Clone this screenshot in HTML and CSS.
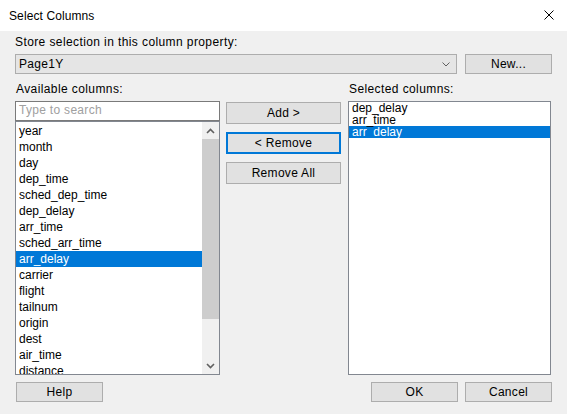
FILE: index.html
```html
<!DOCTYPE html>
<html>
<head>
<meta charset="utf-8">
<link rel="stylesheet" href="styles.css">
</head>
<body>
<div class="dialog">
  <div class="titlebar">
    <span class="title">Select Columns</span>
    <svg class="close" width="10" height="10" viewBox="0 0 10 10"><path d="M0.5 0.5 L9.5 9.5 M9.5 0.5 L0.5 9.5" stroke="#000" stroke-width="1" fill="none"/></svg>
  </div>
  <div class="content">
    <div class="label top-label">Store selection in this column property:</div>
    <div class="combo-row">
      <div class="combo">
        <span>Page1Y</span>
        <svg class="chev" width="8" height="5" viewBox="0 0 8 5"><path d="M0.5 0.5 L4 4 L7.5 0.5" stroke="#606060" stroke-width="1" fill="none"/></svg>
      </div>
      <div class="btn btn-new">New...</div>
    </div>
    <div class="labels-row">
      <div class="label">Available columns:</div>
      <div class="label">Selected columns:</div>
    </div>
    <div class="main">
      <div class="left-col">
        <div class="search">Type to search</div>
        <div class="list avail">
          <div class="items">
            <div class="item">year</div>
            <div class="item">month</div>
            <div class="item">day</div>
            <div class="item">dep_time</div>
            <div class="item">sched_dep_time</div>
            <div class="item">dep_delay</div>
            <div class="item">arr_time</div>
            <div class="item">sched_arr_time</div>
            <div class="item sel">arr_delay</div>
            <div class="item">carrier</div>
            <div class="item">flight</div>
            <div class="item">tailnum</div>
            <div class="item">origin</div>
            <div class="item">dest</div>
            <div class="item">air_time</div>
            <div class="item">distance</div>
          </div>
          <div class="scrollbar">
            <div class="sb-btn"><svg width="9" height="6" viewBox="0 0 9 6"><path d="M1 5 L4.5 1.5 L8 5" stroke="#606060" stroke-width="1.6" fill="none"/></svg></div>
            <div class="thumb"></div>
            <div class="track"></div>
            <div class="sb-btn"><svg width="9" height="6" viewBox="0 0 9 6"><path d="M1 1 L4.5 4.5 L8 1" stroke="#606060" stroke-width="1.6" fill="none"/></svg></div>
          </div>
        </div>
      </div>
      <div class="mid-col">
        <div class="btn btn-mid">Add &gt;</div>
        <div class="btn btn-mid focused">&lt; Remove</div>
        <div class="btn btn-mid">Remove All</div>
      </div>
      <div class="list selected">
        <div class="sitem">dep_delay</div>
        <div class="sitem">arr_time</div>
        <div class="sitem sel">arr_delay</div>
      </div>
    </div>
    <div class="bottom-row">
      <div class="btn btn-bottom help">Help</div>
      <div class="spacer"></div>
      <div class="btn btn-bottom">OK</div>
      <div class="btn btn-bottom">Cancel</div>
    </div>
  </div>
</div>
</body>
</html>
```
FILE: styles.css
```css
html, body {
  margin: 0;
  padding: 0;
}
body {
  width: 567px;
  height: 414px;
  overflow: hidden;
  background: #f0f0f0;
  font-family: "Liberation Sans", Arial, sans-serif;
  font-size: 12px;
  color: #000;
}
.dialog {
  width: 567px;
  height: 414px;
  display: flex;
  flex-direction: column;
}
.titlebar {
  height: 31px;
  background: #fff;
  display: flex;
  align-items: center;
  padding-left: 9px;
  box-sizing: border-box;
}
.title {
  font-size: 12px;
  letter-spacing: 0.1px;
}
.close {
  margin-left: auto;
  margin-right: 13px;
  margin-top: -1px;
}
.content {
  padding: 0 15px 0 15px;
  display: flex;
  flex-direction: column;
}
.label {
  line-height: 15px;
  letter-spacing: 0.4px;
  padding-left: 1px;
}
.top-label {
  margin-top: 4px;
  padding-left: 0;
}
.combo-row {
  margin-top: 4px;
  display: flex;
  gap: 8px;
  height: 20px;
}
.combo {
  width: 442px;
  box-sizing: border-box;
  background: #e5e5e5;
  border: 1px solid #adadad;
  display: flex;
  align-items: center;
  padding-left: 3px;
  padding-right: 6px;
  letter-spacing: 0.3px;
}
.chev {
  margin-left: auto;
}
.btn {
  box-sizing: border-box;
  background: #e1e1e1;
  border: 1px solid #adadad;
  display: flex;
  align-items: center;
  justify-content: center;
  letter-spacing: 0.3px;
}
.btn-new {
  width: 87px;
}
.labels-row {
  margin-top: 8px;
  display: grid;
  grid-template-columns: 333px 204px;
}
.main {
  margin-top: 4px;
  display: grid;
  grid-template-columns: 205px 115px 204px;
  column-gap: 6px;
  height: 274px;
}
.main > .list.selected {
  margin-left: 1px;
}
.left-col {
  display: flex;
  flex-direction: column;
}
.search {
  height: 20px;
  box-sizing: border-box;
  border: 1px solid #7a7a7a;
  background: #fff;
  color: #a0a0a0;
  padding-left: 3px;
  line-height: 17px;
  letter-spacing: 0.3px;
}
.list {
  background: #fff;
  border: 1px solid #828790;
  box-sizing: border-box;
}
.avail {
  height: 254px;
  display: flex;
  overflow: hidden;
}
.items {
  flex: 1;
  padding-top: 1px;
  overflow: hidden;
}
.item {
  height: 16px;
  line-height: 16px;
  padding-left: 3px;
  white-space: nowrap;
}
.sel {
  background: #0078d7;
  color: #fff;
}
.scrollbar {
  width: 17px;
  background: #f0f0f0;
  display: flex;
  flex-direction: column;
}
.sb-btn {
  height: 17px;
  display: flex;
  align-items: center;
  justify-content: center;
}
.thumb {
  height: 180px;
  background: #cdcdcd;
}
.track {
  flex: 1;
}
.mid-col {
  display: flex;
  flex-direction: column;
  gap: 8px;
  padding-top: 1px;
}
.btn-mid {
  height: 22px;
}
.focused {
  border: 2px solid #0078d7;
}
.selected {
  height: 274px;
  padding-top: 0;
}
.sitem {
  height: 12px;
  line-height: 12px;
  padding-left: 3px;
  white-space: nowrap;
}
.bottom-row {
  margin-top: 7px;
  display: flex;
  gap: 7px;
  height: 20px;
}
.help {
  margin-left: 1px;
}
.spacer {
  flex: 1;
}
.btn-bottom {
  width: 87px;
}
```
